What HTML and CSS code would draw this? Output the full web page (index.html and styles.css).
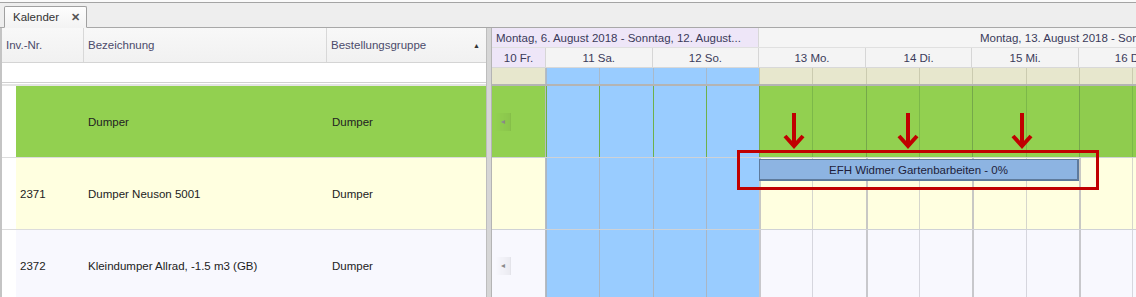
FILE: index.html
```html
<!DOCTYPE html>
<html lang="de">
<head>
<meta charset="utf-8">
<title>Kalender</title>
<link rel="stylesheet" href="styles.css">
</head>
<body>
<div class="app">
  <div class="topbar"></div>
  <div class="tabstrip">
    <div class="tab"><span class="tab-label">Kalender</span><span class="tab-close">✕</span></div>
  </div>
  <div class="main">
    <div class="grid-left">
      <div class="lhead">
        <div class="hc hc1">Inv.-Nr.</div>
        <div class="hc hc2">Bezeichnung</div>
        <div class="hc hc3"><span>Bestellungsgruppe</span><span class="sort">▲</span></div>
      </div>
      <div class="filter"></div>
      <div class="lsep"></div>
      <div class="lrow r-green">
        <div class="ind"></div>
        <div class="lc lc1"></div>
        <div class="lc lc2">Dumper</div>
        <div class="lc lc3">Dumper</div>
      </div>
      <div class="lrow r-yellow">
        <div class="ind"></div>
        <div class="lc lc1">2371</div>
        <div class="lc lc2">Dumper Neuson 5001</div>
        <div class="lc lc3">Dumper</div>
      </div>
      <div class="lrow r-white">
        <div class="ind"></div>
        <div class="lc lc1">2372</div>
        <div class="lc lc2">Kleindumper Allrad, -1.5 m3 (GB)</div>
        <div class="lc lc3">Dumper</div>
      </div>
    </div>
    <div class="splitter"></div>
    <div class="sched">
      <div class="weeks">
        <div class="wk wk1">Montag, 6. August 2018 - Sonntag, 12. August...</div>
        <div class="wk wk2">Montag, 13. August 2018 - Sonntag, 19. August 2018</div>
      </div>
      <div class="days">
        <div class="dy dy0">10 Fr.</div>
        <div class="dy">11 Sa.</div>
        <div class="dy">12 So.</div>
        <div class="dy">13 Mo.</div>
        <div class="dy">14 Di.</div>
        <div class="dy">15 Mi.</div>
        <div class="dy">16 Do.</div>
      </div>
      <div class="srow strip">
        <div class="cell c0"></div>
        <div class="cell h we day"></div><div class="cell h we"></div>
        <div class="cell h we day"></div><div class="cell h we"></div>
        <div class="cell h day"></div><div class="cell h"></div>
        <div class="cell h day"></div><div class="cell h"></div>
        <div class="cell h day"></div><div class="cell h"></div>
        <div class="cell h day"></div><div class="cell h"></div>
      </div>
      <div class="srow body green">
        <div class="cell c0"><span class="more">◂</span></div>
        <div class="cell h we day"></div><div class="cell h we"></div>
        <div class="cell h we day"></div><div class="cell h we"></div>
        <div class="cell h day"></div><div class="cell h"></div>
        <div class="cell h day"></div><div class="cell h"></div>
        <div class="cell h day"></div><div class="cell h"></div>
        <div class="cell h day alt"></div><div class="cell h alt"></div>
      </div>
      <div class="srow body yellow">
        <div class="cell c0"></div>
        <div class="cell h we day"></div><div class="cell h we"></div>
        <div class="cell h we day"></div><div class="cell h we"></div>
        <div class="cell h day"></div><div class="cell h"></div>
        <div class="cell h day"></div><div class="cell h"></div>
        <div class="cell h day"></div><div class="cell h"></div>
        <div class="cell h day"></div><div class="cell h"></div>
        <div class="appt">EFH Widmer Gartenbarbeiten - 0%</div>
      </div>
      <div class="srow body white">
        <div class="cell c0"><span class="more">◂</span></div>
        <div class="cell h we day"></div><div class="cell h we"></div>
        <div class="cell h we day"></div><div class="cell h we"></div>
        <div class="cell h day"></div><div class="cell h"></div>
        <div class="cell h day"></div><div class="cell h"></div>
        <div class="cell h day"></div><div class="cell h"></div>
        <div class="cell h day"></div><div class="cell h"></div>
      </div>
      <div class="redbox"></div>
      <svg class="arrow a1" width="22" height="36" viewBox="0 0 22 36"><path d="M11 0 V33 M2 23 L11 33 L20 23" fill="none" stroke="#c00000" stroke-width="4"/></svg>
      <svg class="arrow a2" width="22" height="36" viewBox="0 0 22 36"><path d="M11 0 V33 M2 23 L11 33 L20 23" fill="none" stroke="#c00000" stroke-width="4"/></svg>
      <svg class="arrow a3" width="22" height="36" viewBox="0 0 22 36"><path d="M11 0 V33 M2 23 L11 33 L20 23" fill="none" stroke="#c00000" stroke-width="4"/></svg>
    </div>
  </div>
</div>
</body>
</html>
```

FILE: styles.css
```css
* { box-sizing: border-box; }
html, body { margin: 0; padding: 0; }
body {
  width: 1136px;
  height: 297px;
  overflow: hidden;
  background: #efefef;
  font-family: "Liberation Sans", Arial, sans-serif;
  font-size: 11.5px;
  color: #222;
}
.app { width: 1136px; height: 297px; display: flex; flex-direction: column; }

.topbar { height: 3px; background: #fafafa; border-bottom: 1px solid #a4a4a4; flex: none; }
.tabstrip {
  height: 25px;
  flex: none;
  display: flex;
  align-items: flex-end;
  padding-left: 4px;
  background: #eeeeee;
  border-bottom: 1px solid #a8a8a8;
}
.tab {
  width: 83px;
  height: 22px;
  margin-bottom: -1px;
  display: flex;
  align-items: center;
  justify-content: space-between;
  padding: 0 6px 0 8px;
  background: linear-gradient(#fdfdfd, #f3f3f3);
  border: 1px solid #a0a0a0;
  border-bottom-color: #f3f3f3;
  border-radius: 2px 2px 0 0;
  color: #333;
}
.tab-close { font-size: 11px; font-weight: bold; color: #555; }

.main { flex: 1; display: flex; min-height: 0; }

/* left grid */
.grid-left {
  width: 486px;
  flex: none;
  display: flex;
  flex-direction: column;
  background: #fff;
  border-left: 2px solid #c4c4c4;
}
.lhead {
  height: 35px;
  flex: none;
  display: flex;
  background: linear-gradient(#f8f8f8, #f1f1f1);
  border-bottom: 1px solid #d4d4d4;
  color: #4b4b6b;
}
.hc { display: flex; align-items: center; padding-left: 4px; border-right: 1px solid #d8d8d8; }
.hc1 { width: 82px; }
.hc2 { width: 243px; }
.hc3 { flex: 1; justify-content: space-between; padding-right: 6px; border-right: none; }
.sort { font-size: 7px; color: #333; }
.filter { height: 19px; flex: none; background: #fff; }
.lsep { height: 4px; flex: none; background: #fff; border-top: 1px solid #d0d0d0; border-bottom: 2px solid #e4e4e4; }
.lrow { height: 72px; flex: none; display: flex; border-bottom: 1px solid #dcdcdc; }
.lrow:last-child { border-bottom: none; }
.ind { width: 14px; background: #fff; }
.lc { display: flex; align-items: center; padding-left: 4px; }
.lc1 { width: 68px; }
.lc2 { width: 243px; }
.lc3 { flex: 1; padding-left: 5px; }
.r-green { background: #92d050; }
.r-yellow { background: #ffffe0; }
.r-white { background: #f8f8fe; }

.splitter {
  width: 6px;
  flex: none;
  background: #d6d6d6;
  border-left: 1px solid #bdbdbd;
  border-right: 1px solid #b4b4b4;
}

/* scheduler */
.sched { flex: 1; position: relative; overflow: hidden; background: #fff; color: #3a3a5a; }
.weeks { height: 20px; display: flex; border-bottom: 1px solid #e0e0e0; }
.wk { flex: none; display: flex; align-items: center; white-space: nowrap; overflow: hidden; }
.wk1 { width: 267px; padding-left: 4px; background: #eee6f8; border-right: 1px solid #d8d8d8; }
.wk2 { width: 746px; padding-left: 221px; background: #f5f5f5; }
.days { height: 20px; display: flex; background: #f4f4f4; border-bottom: 1px solid #d8d8d8; }
.dy { flex: none; width: 106.6px; display: flex; align-items: center; justify-content: center; border-right: 1px solid #d6d6d6; }
.dy0 { width: 54px; background: #eee6f8; }

.srow { display: flex; position: relative; }
.cell { flex: none; border-left: 1px solid #d4d4cc; }
.c0 { width: 54px; display: flex; align-items: center; }
.h { width: 53.3px; }
.strip { height: 18px; border-bottom: 2px solid #b4b4b4; }
.strip .cell { background: #e7e7cd; border-left-color: #cbcbb0; }
.strip .we { background: #99ccff; border-left-color: #a9b9c9; }

.body { height: 72px; border-bottom: 1px solid #cfd2d6; }
.body:last-of-type { border-bottom: none; }
.green .cell { background: #92d050; border-left-color: #7cb849; }
.green .day { border-left-color: #75a84a; }
.green .alt { background: #8fcc4e; }
.green .we { background: #99ccff; border-left-color: #6fb04a; }
.yellow .cell { background: #ffffe0; border-left-color: #d6d6cc; }
.yellow .day { border-left: 2px solid #c8c8c4; }
.yellow .we { background: #99ccff; border-left: 1px solid #aab6c4; }
.white .cell { background: #f8f8fe; border-left-color: #d6d6de; }
.white .day { border-left: 2px solid #c8c8cc; }
.white .we { background: #99ccff; border-left: 1px solid #aab6c4; }
.srow .c0 { border-left: none; border-right: 1px solid #b8bcc0; }

.more {
  width: 16px;
  height: 18px;
  margin-left: 3px;
  display: flex;
  align-items: center;
  justify-content: center;
  font-size: 8px;
  color: #8a8a8a;
  border-right: 1px solid rgba(0, 0, 0, 0.08);
  background: linear-gradient(90deg, rgba(255,255,255,0), rgba(0,0,0,0.05));
}

.appt {
  position: absolute;
  left: 267px;
  top: 1px;
  width: 320px;
  height: 22px;
  display: flex;
  align-items: center;
  justify-content: center;
  background: #8db4e2;
  border: 2px solid #5e7a9c;
  border-top-width: 1px;
  border-left-width: 1px;
  color: #1e1e3a;
}

.redbox {
  position: absolute;
  left: 245px;
  top: 122px;
  width: 362px;
  height: 40px;
  border: 3px solid #c00000;
}
.arrow { position: absolute; top: 85px; }
.a1 { left: 291px; }
.a2 { left: 405px; }
.a3 { left: 519px; }
```
